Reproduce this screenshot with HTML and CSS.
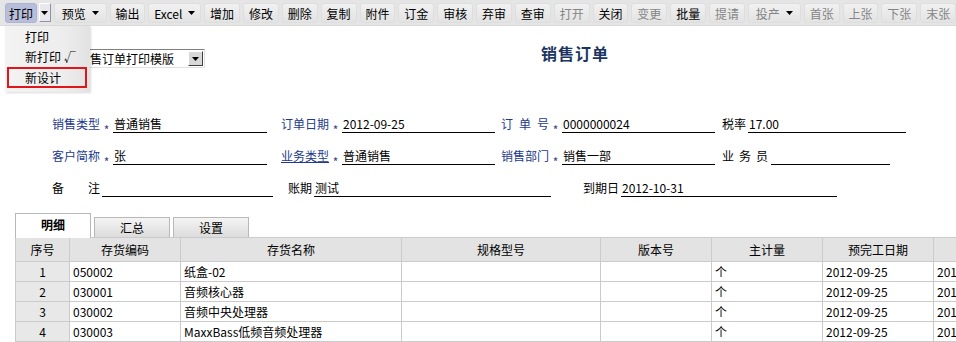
FILE: index.html
```html
<!DOCTYPE html>
<html>
<head>
  <title>销售订单</title>
  <link rel="stylesheet" href="styles.css">
</head>
<body>
  <div class="toolbar">
    <span class="btn active">打印</span>
    <span class="drop"><svg width="7" height="4"><polygon points="0,0 7,0 3.5,4" fill="#000"/></svg></span>
    <span class="btn wide">预览 <svg width="7" height="4"><polygon points="0,0 7,0 3.5,4" fill="#000"/></svg></span>
    <span class="btn">输出</span>
    <span class="btn wide">Excel <svg width="7" height="4"><polygon points="0,0 7,0 3.5,4" fill="#000"/></svg></span>
    <span class="btn">增加</span>
    <span class="btn">修改</span>
    <span class="btn">删除</span>
    <span class="btn">复制</span>
    <span class="btn">附件</span>
    <span class="btn">订金</span>
    <span class="btn">审核</span>
    <span class="btn">弃审</span>
    <span class="btn">查审</span>
    <span class="btn off">打开</span>
    <span class="btn">关闭</span>
    <span class="btn off">变更</span>
    <span class="btn">批量</span>
    <span class="btn off">提请</span>
    <span class="btn off wide">投产 <svg width="7" height="4"><polygon points="0,0 7,0 3.5,4" fill="#000"/></svg></span>
    <span class="btn off">首张</span>
    <span class="btn off">上张</span>
    <span class="btn off">下张</span>
    <span class="btn off">末张</span>
  </div>

  <!-- print dropdown, open over the page -->
  <div class="menu">
    <div class="menu-item">打印</div>
    <div class="menu-item">新打印 √</div>
    <div class="menu-item picked">新设计</div>
  </div>

  <div class="head">
    <div class="select">
      <span class="select-text">销售订单打印模版</span>
      <span class="select-btn"><svg width="7" height="4"><polygon points="0,0 7,0 3.5,4" fill="#000"/></svg></span>
    </div>
    <h1 class="title">销售订单</h1>
  </div>

  <div class="form">
    <div class="row">
      <div class="field">
        <span class="label req">销售类型</span><span class="star">*</span>
        <span class="line w154">普通销售</span>
      </div>
      <div class="field gap14">
        <span class="label req">订单日期</span><span class="star">*</span>
        <span class="line w153">2012-09-25</span>
      </div>
      <div class="field gap6">
        <span class="label req spread"><span>订</span><span>单</span><span>号</span></span><span class="star">*</span>
        <span class="line w153">0000000024</span>
      </div>
      <div class="field gap7">
        <span class="label short">税率</span>
        <span class="line w158">17.00</span>
      </div>
    </div>
    <div class="row">
      <div class="field">
        <span class="label req">客户简称</span><span class="star">*</span>
        <span class="line w154">张</span>
      </div>
      <div class="field gap14">
        <span class="label req link">业务类型</span><span class="star">*</span>
        <span class="line w153">普通销售</span>
      </div>
      <div class="field gap6">
        <span class="label req">销售部门</span><span class="star">*</span>
        <span class="line w153">销售一部</span>
      </div>
      <div class="field gap7">
        <span class="label mid spread"><span>业</span><span>务</span><span>员</span></span>
        <span class="line w119"></span>
      </div>
    </div>
    <div class="row">
      <div class="field">
        <span class="label wide spread"><span>备</span><span>注</span></span>
        <span class="line w171"></span>
      </div>
      <div class="field gap15">
        <span class="label short">账期</span>
        <span class="line w237">测试</span>
      </div>
      <div class="field gap32">
        <span class="label short3">到期日</span>
        <span class="line w216">2012-10-31</span>
      </div>
    </div>
  </div>

  <div class="tabs">
    <span class="tab current">明细</span>
    <span class="tab">汇总</span>
    <span class="tab">设置</span>
  </div>

  <div class="grid">
    <table>
      <colgroup>
        <col class="c-no"><col class="c-code"><col class="c-name"><col class="c-spec">
        <col class="c-std"><col class="c-std"><col class="c-std"><col class="c-std">
      </colgroup>
      <thead>
        <tr>
          <th>序号</th><th>存货编码</th><th>存货名称</th><th>规格型号</th>
          <th>版本号</th><th>主计量</th><th>预完工日期</th><th>预发货日期</th>
        </tr>
      </thead>
      <tbody>
        <tr><td class="no">1</td><td>050002</td><td>纸盒-02</td><td></td><td></td><td>个</td><td>2012-09-25</td><td>2012-09-25</td></tr>
        <tr><td class="no">2</td><td>030001</td><td>音频核心器</td><td></td><td></td><td>个</td><td>2012-09-25</td><td>2012-09-25</td></tr>
        <tr><td class="no">3</td><td>030002</td><td>音频中央处理器</td><td></td><td></td><td>个</td><td>2012-09-25</td><td>2012-09-25</td></tr>
        <tr><td class="no">4</td><td>030003</td><td>MaxxBass低频音频处理器</td><td></td><td></td><td>个</td><td>2012-09-25</td><td>2012-09-25</td></tr>
      </tbody>
    </table>
  </div>
</body>
</html>
```

FILE: styles.css
```css
body {
  margin: 0;
  width: 956px;
  height: 342px;
  overflow: hidden;
  font: 12px "Noto Sans CJK SC", "Liberation Sans", sans-serif;
  color: #000;
  background: #fff;
  position: relative;
}

/* toolbar */
.toolbar {
  height: 26px;
  box-sizing: border-box;
  padding: 3px 0 0 5px;
  display: flex;
  align-items: flex-start;
  gap: 3px;
  background: #e5e5e5;
  border-bottom: 1px solid #dadada;
  white-space: nowrap;
}
.btn {
  width: 36px;
  height: 20px;
  box-sizing: border-box;
  display: flex;
  align-items: center;
  justify-content: center;
  gap: 6px;
  background: linear-gradient(#f1f1f1, #e3e3e3);
  border: 1px solid #dedede;
  border-radius: 3px;
}
.btn.wide {width: 53px;}
.btn.off {color: #858585;}
.btn.active {
  width: 32px;
  background: #b7bedb;
  border-color: #adb4d2;
}
.drop {
  width: 12px;
  height: 19px;
  margin-left: -1px;
  box-sizing: border-box;
  display: flex;
  align-items: center;
  justify-content: center;
  background: #e8e8ee;
  border: 1px solid #8e94a8;
  border-top-color: #fff;
  border-left-color: #fff;
}

/* dropdown menu */
.menu {
  position: absolute;
  left: 5px;
  top: 26px;
  width: 85px;
  height: 66px;
  box-sizing: border-box;
  padding-top: 1px;
  background: linear-gradient(90deg, #f3f3f3, #ededed 70%, #e2e2e2);
  box-shadow: 1px 1px 2px rgba(0, 0, 0, 0.15);
  z-index: 2;
}
.menu-item {
  height: 20px;
  line-height: 20px;
  padding-left: 20px;
}
.menu-item.picked {
  margin: 0 3px 0 2px;
  padding-left: 16px;
  border: 2px solid #e0161b;
  height: 17px;
  line-height: 17px;
}

/* heading */
.head {
  height: 75px;
  display: flex;
  align-items: flex-start;
}
.select {
  margin: 23px 0 0 74px;
  width: 131px;
  height: 19px;
  box-sizing: border-box;
  display: flex;
  align-items: center;
  justify-content: space-between;
  border: 1px solid #7f9db9;
  border-color: #808080 #e0e0e0 #e0e0e0 #808080;
  padding-left: 3px;
}
.select-btn {
  width: 15px;
  height: 15px;
  box-sizing: border-box;
  display: flex;
  align-items: center;
  justify-content: center;
  background: #d8d8d8;
  border: 1px solid #fff;
  border-right-color: #404040;
  border-bottom-color: #404040;
  margin-right: 1px;
}
.title {
  margin: 15px 0 0 336px;
  font-size: 16px;
  font-weight: bold;
  letter-spacing: 1px;
  color: #1b3562;
}

/* form */
.form {padding-left: 52px;}
.row {
  height: 32px;
  display: flex;
  align-items: flex-end;
}
.field {
  display: flex;
  align-items: flex-end;
}
.gap6 {margin-left: 6px;}
.gap7 {margin-left: 7px;}
.gap14 {margin-left: 14px;}
.gap15 {margin-left: 15px;}
.gap32 {margin-left: 32px;}
.label {
  line-height: 18px;
  white-space: pre;
}
.label.req {width: 48px; color: #233a8c;}
.label.link {text-decoration: underline;}
.label.short {width: 26px;}
.label.short3 {width: 38px;}
.label.mid {width: 46px; margin-right: 3px;}
.label.wide {width: 48px; margin-right: 2px;}
.label.spread {
  display: flex;
  justify-content: space-between;
}
.star {
  width: 13px;
  text-align: center;
  line-height: 6px;
  font-size: 12px;
  color: #44447a;
}
.line {
  height: 18px;
  line-height: 17px;
  box-sizing: border-box;
  padding-left: 1px;
  border-bottom: 1px solid #000;
}
.w119 {width: 119px;}
.w153 {width: 153px;}
.w154 {width: 154px;}
.w158 {width: 158px;}
.w171 {width: 171px;}
.w216 {width: 216px;}
.w237 {width: 237px;}

/* tabs */
.tabs {
  margin-top: 16px;
  padding-left: 15px;
  height: 24px;
  display: flex;
  align-items: flex-end;
  gap: 3px;
}
.tab {
  width: 76px;
  height: 20px;
  box-sizing: border-box;
  display: flex;
  align-items: center;
  justify-content: center;
  background: linear-gradient(#f4f4f4, #dcdcdc);
  border: 1px solid #b8b8b8;
  border-bottom: none;
}
.tab.current {
  width: 76px;
  height: 25px;
  margin-bottom: -1px;
  padding-bottom: 4px;
  background: #fff;
  font-weight: bold;
  position: relative;
  z-index: 1;
}

/* grid */
.grid {
  margin-left: 15px;
  overflow: hidden;
}
table {
  width: 1028px;
  table-layout: fixed;
  border-collapse: collapse;
}
.c-no {width: 54px;}
.c-code {width: 111px;}
.c-name {width: 221px;}
.c-spec {width: 199px;}
.c-std {width: 111px;}
th, td {
  border: 1px solid #cbcbcb;
  padding: 0 0 0 3px;
  white-space: nowrap;
  overflow: hidden;
  font-weight: normal;
}
th {
  height: 23px;
  background: #e3e3e3;
  text-align: center;
  padding: 0;
}
td {height: 19px;}
td.no {
  background: #e8e8e8;
  text-align: center;
  padding: 0;
}
```
